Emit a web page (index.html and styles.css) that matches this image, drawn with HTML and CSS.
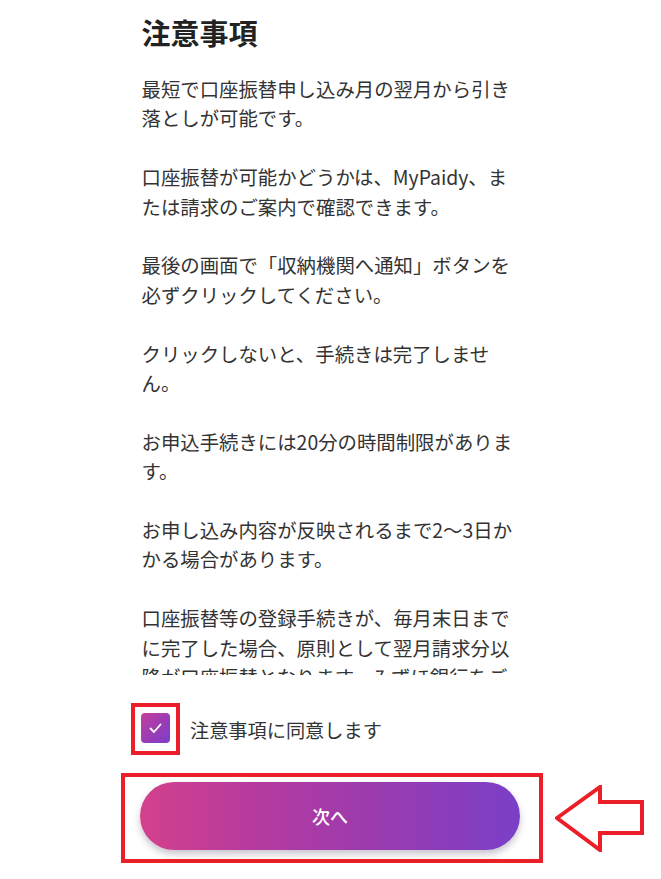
FILE: index.html
```html
<!DOCTYPE html>
<html lang="ja">
<head>
<meta charset="utf-8">
<title>注意事項</title>
<link rel="stylesheet" href="styles.css">
</head>
<body>
<div class="page">
  <div class="scroll">
    <h1 class="title">注意事項</h1>
    <p>最短で口座振替申し込み月の翌月から引き落としが可能です。</p>
    <p>口座振替が可能かどうかは、MyPaidy、または請求のご案内で確認できます。</p>
    <p>最後の画面で「収納機関へ通知」ボタンを必ずクリックしてください。</p>
    <p>クリックしないと、手続きは完了しません。</p>
    <p>お申込手続きには20分の時間制限があります。</p>
    <p>お申し込み内容が反映されるまで2〜3日かかる場合があります。</p>
    <p>口座振替等の登録手続きが、毎月末日までに完了した場合、原則として翌月請求分以降が口座振替となります。みずほ銀行をご</p>
  </div>

  <div class="agree-row">
    <div class="mark-frame">
      <span class="checkbox">
        <svg width="29" height="30" viewBox="0 0 29 30"><path d="M9.5 15.5 L13 19 L19.5 11.5" fill="none" stroke="#fff" stroke-width="1.8" stroke-linecap="round" stroke-linejoin="round"/></svg>
      </span>
    </div>
    <span class="agree-label">注意事項に同意します</span>
  </div>

  <div class="button-row">
    <div class="btn-frame">
      <button class="next-btn">次へ</button>
    </div>
    <svg class="arrow" width="89" height="67" viewBox="0 0 89 67">
      <path d="M2 33 L45 2 L45 17 L87 17 L87 48 L45 48 L45 65 Z" fill="none" stroke="#ea1f27" stroke-width="4" stroke-linejoin="miter"/>
    </svg>
  </div>
</div>
</body>
</html>
```

FILE: styles.css
```css
html, body {
  margin: 0;
  padding: 0;
  background: #ffffff;
}

body {
  font-family: "Noto Sans CJK JP", "Noto Sans", sans-serif;
  color: #333333;
}

.page {
  width: 380px;
  margin: 0 auto;
}

.scroll {
  height: 675px;
  overflow: hidden;
  padding-top: 15px;
  box-sizing: border-box;
  padding-left: 1px;
}

.title {
  margin: 0 0 24px;
  font-size: 29px;
  line-height: 35px;
  font-weight: 700;
  color: #222222;
}

.scroll p {
  margin: 0 0 29.4px;
  font-size: 19.4px;
  line-height: 29.4px;
  color: #333333;
}

.scroll p:last-child {
  margin-bottom: 0;
}

.agree-row {
  display: flex;
  align-items: center;
  margin-top: 28px;
  margin-left: -9.5px;
}

.mark-frame {
  border: 4px solid #ea1f27;
  padding: 6px 6px 8px 6px;
  display: flex;
  flex-shrink: 0;
}

.checkbox {
  width: 29px;
  height: 30px;
  border-radius: 4px;
  background: linear-gradient(135deg, #c5409b 0%, #9a3cb5 55%, #7b40c9 100%);
  display: block;
}

.checkbox svg {
  display: block;
}

.agree-label {
  margin-left: 10px;
  font-size: 19.2px;
  line-height: 28px;
  color: #333333;
  padding-top: 2px;
  white-space: nowrap;
}

.button-row {
  display: flex;
  align-items: center;
  margin-top: 18px;
  margin-left: -19.5px;
  width: 520px;
}

.btn-frame {
  border: 4px solid #ea1f27;
  padding: 5px 19px 9px 15px;
  display: flex;
  flex-shrink: 0;
}

.next-btn {
  width: 380px;
  height: 68px;
  border: none;
  border-radius: 34px;
  background: linear-gradient(90deg, #d3418c 0%, #b63a9f 30%, #9c3bae 60%, #7a3fc7 100%);
  box-shadow: 0 4px 7px rgba(60, 40, 80, 0.28);
  color: #ffffff;
  font-family: "Noto Sans CJK JP", "Noto Sans", sans-serif;
  font-size: 18px;
  font-weight: 500;
  padding: 0;
}

.arrow {
  margin-left: 12px;
  display: block;
  flex-shrink: 0;
}
```
